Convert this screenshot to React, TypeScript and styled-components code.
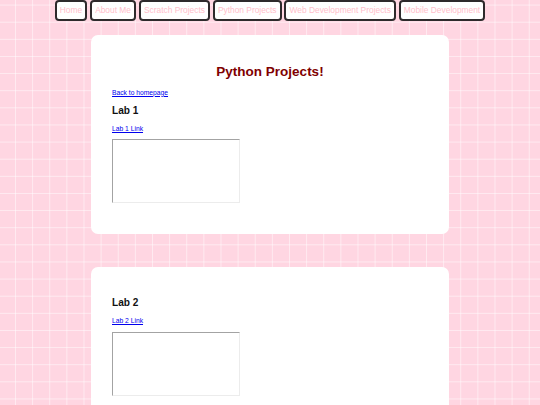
import React from "react";
import styled, { createGlobalStyle } from "styled-components";

const GlobalStyle = createGlobalStyle`
  html, body {
    margin: 0;
    padding: 0;
  }
  body {
    font-family: "Liberation Sans", Arial, sans-serif;
    background-color: #ffd6e2;
    background-image:
      linear-gradient(to right, rgba(255, 255, 255, 0.5) 1px, transparent 1px),
      linear-gradient(to bottom, rgba(255, 255, 255, 0.5) 1px, transparent 1px);
    background-size: 17.14px 17.14px;
    background-position: 15px 4.6px;
  }
`;

const Page = styled.div`
  display: flex;
  flex-direction: column;
  align-items: center;
  padding-bottom: 40px;
`;

const Nav = styled.nav`
  display: flex;
  justify-content: center;
  gap: 2.6px;
  margin-bottom: 14px;
`;

const NavButton = styled.button`
  height: 20.5px;
  padding: 0 3.2px;
  border: 2px solid #2e2a2c;
  border-radius: 4px;
  background: #ffffff;
  color: #ffc0cb;
  font-family: "Liberation Sans", Arial, sans-serif;
  font-size: 8.4px;
  line-height: 1;
  cursor: pointer;
`;

const Cards = styled.div`
  display: flex;
  flex-direction: column;
  gap: 33px;
`;

const Card = styled.section`
  width: 358px;
  box-sizing: border-box;
  background: #ffffff;
  border-radius: 7px;
  padding: 29.5px 21px 31px;
  display: flex;
  flex-direction: column;
  align-items: flex-start;
`;

const Title = styled.h1`
  align-self: stretch;
  margin: 0 0 8.5px;
  text-align: center;
  font-size: 13.5px;
  line-height: 16px;
  font-weight: bold;
  color: #800000;
`;

const TextLink = styled.a<{ $gap: number }>`
  display: block;
  margin: 0 0 ${(p) => p.$gap}px;
  font-size: 6.72px;
  line-height: 8px;
  color: #0000ee;
  text-decoration: underline;
`;

const LabTitle = styled.h2`
  margin: 0 0 8.4px;
  font-size: 10.1px;
  line-height: 12px;
  font-weight: bold;
  color: #111111;
`;

const Frame = styled.div`
  display: block;
  width: 128px;
  height: 64px;
  box-sizing: border-box;
  border-top: 1px solid #a3a3a3;
  border-left: 1.5px solid #a3a3a3;
  border-right: 1px solid #ececec;
  border-bottom: 1px solid #ececec;
  background: #ffffff;
`;

const navItems = [
  "Home",
  "About Me",
  "Scratch Projects",
  "Python Projects",
  "Web Development Projects",
  "Mobile Development",
];

export default function App() {
  return (
    <>
      <GlobalStyle />
      <Page>
        <Nav>
          {navItems.map((item) => (
            <NavButton key={item}>{item}</NavButton>
          ))}
        </Nav>
        <Cards>
          <Card>
            <Title>Python Projects!</Title>
            <TextLink href="#" $gap={8}>
              Back to homepage
            </TextLink>
            <LabTitle>Lab 1</LabTitle>
            <TextLink href="#" $gap={6.5}>
              Lab 1 Link
            </TextLink>
            <Frame />
          </Card>
          <Card>
            <LabTitle>Lab 2</LabTitle>
            <TextLink href="#" $gap={6.5}>
              Lab 2 Link
            </TextLink>
            <Frame />
          </Card>
        </Cards>
      </Page>
    </>
  );
}
